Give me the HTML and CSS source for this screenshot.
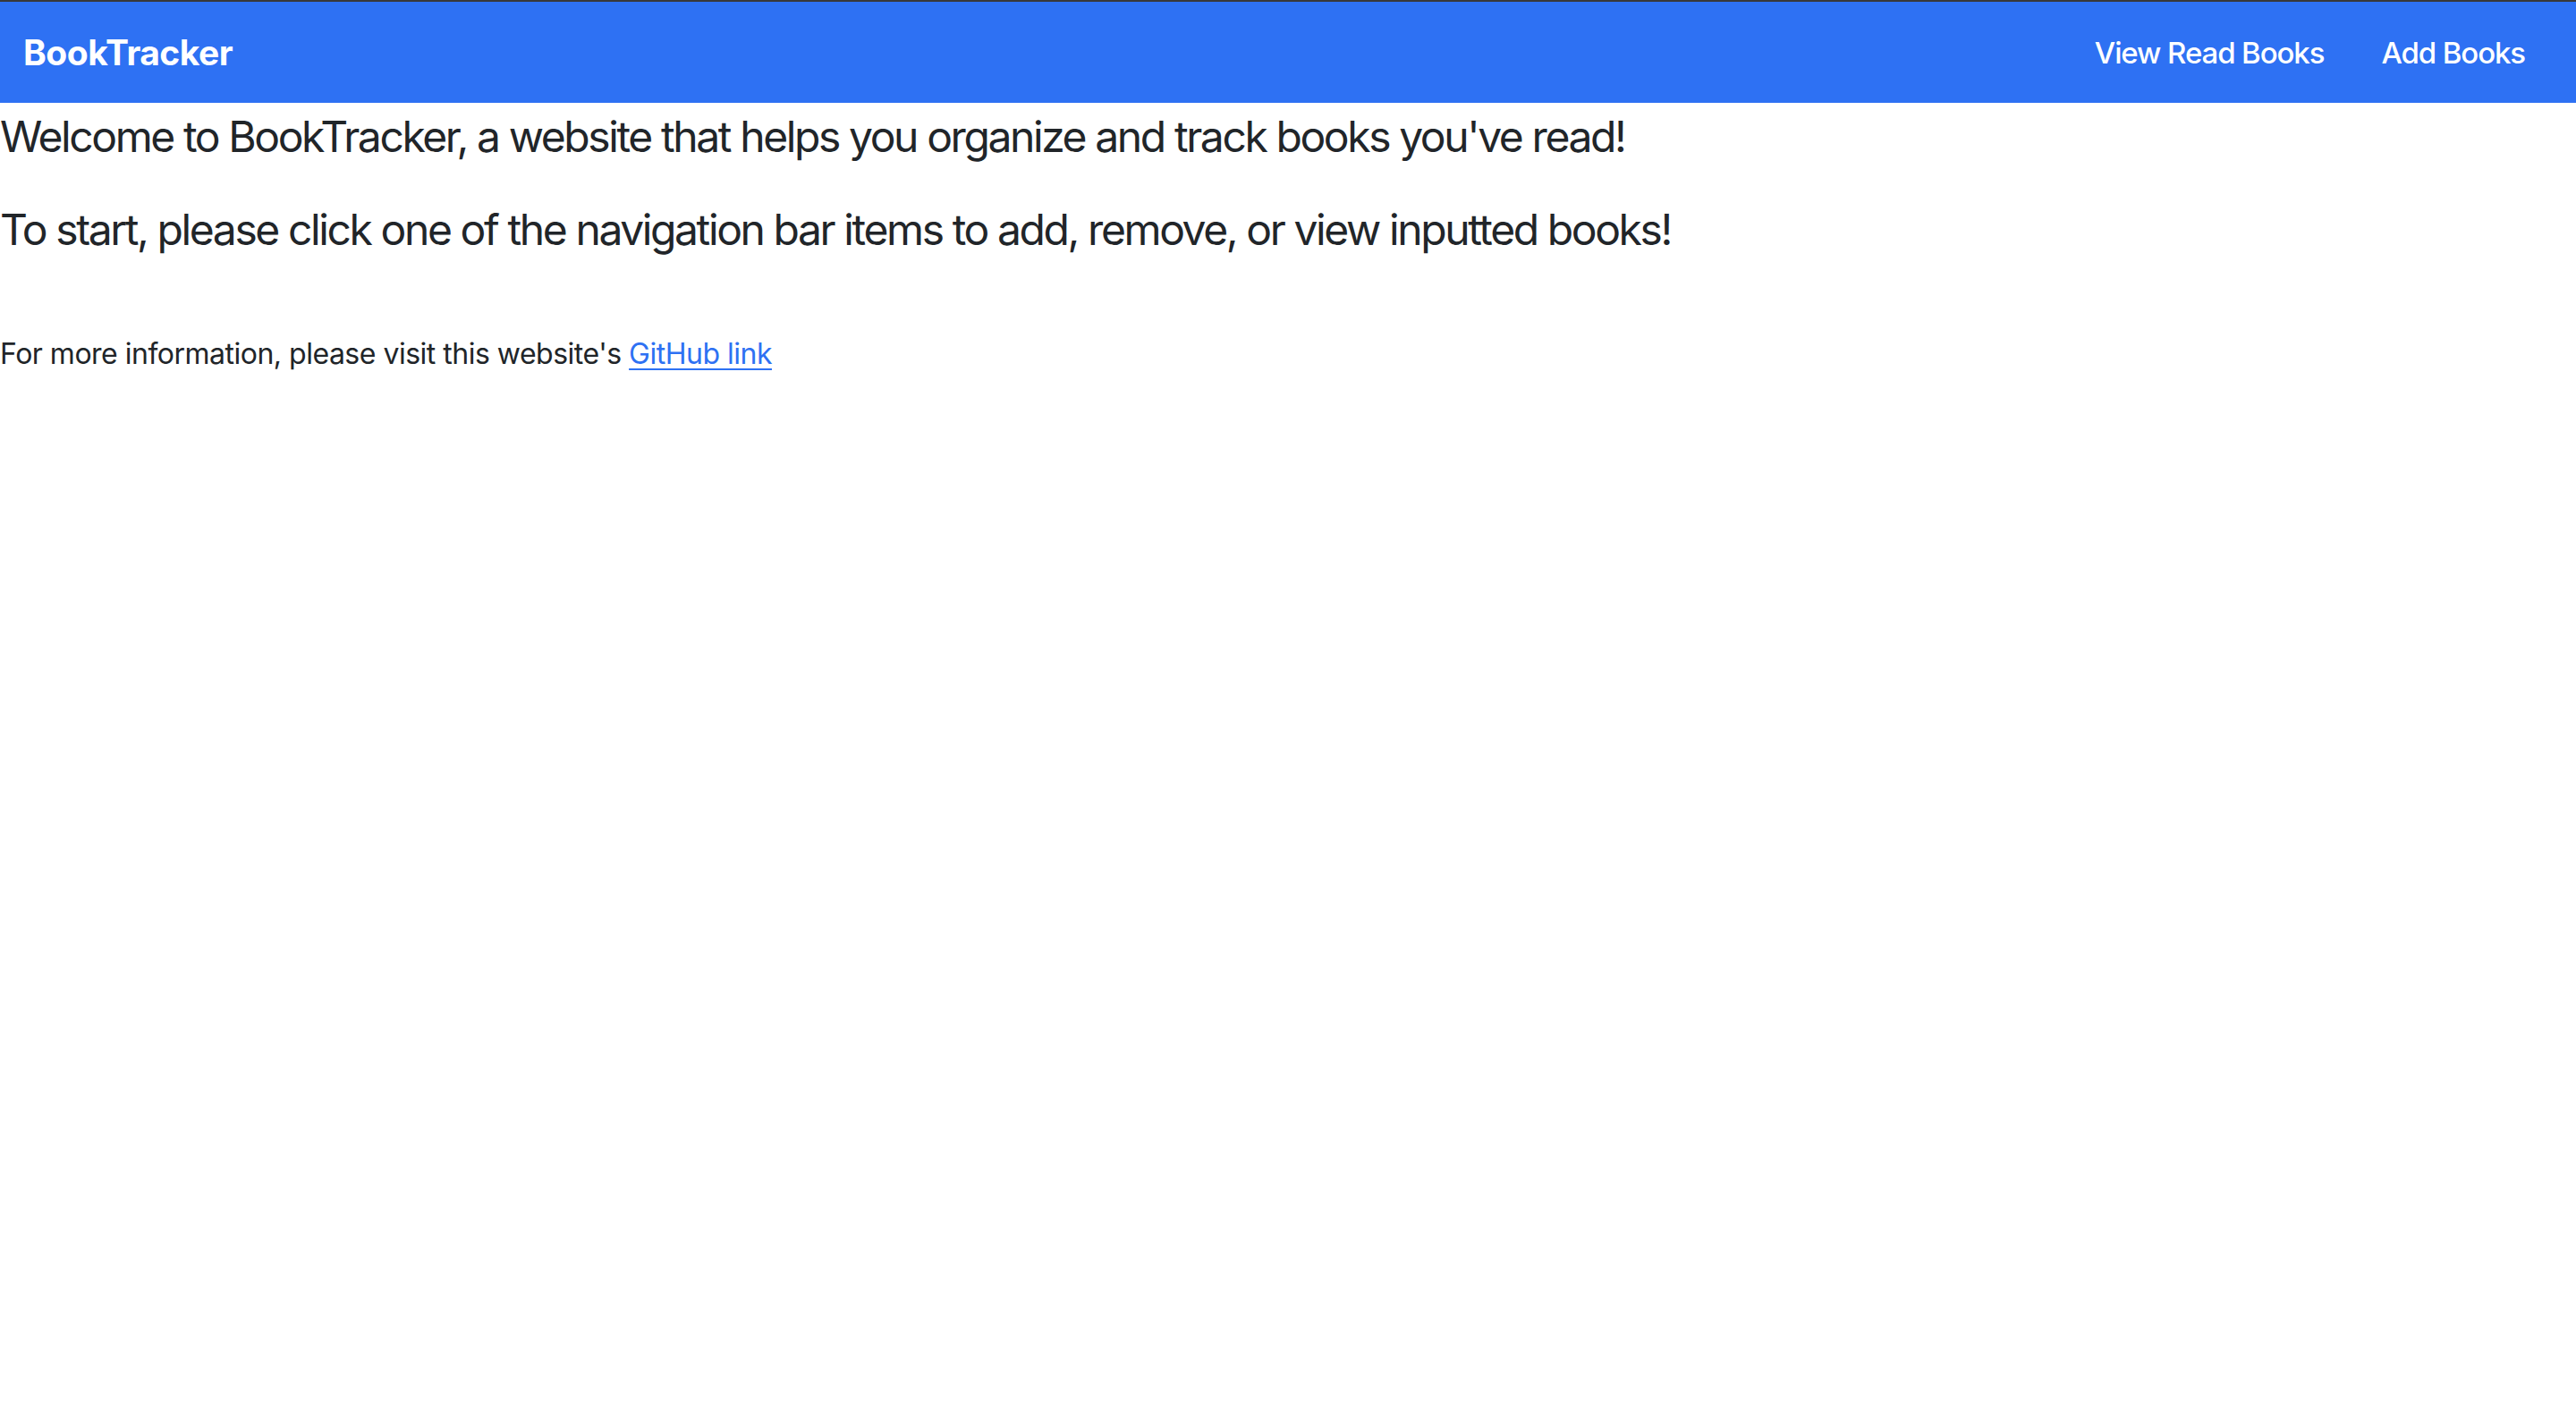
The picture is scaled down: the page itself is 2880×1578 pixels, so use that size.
FILE: index.html
```html
<!DOCTYPE html>
<html lang="en">
<head>
<meta charset="utf-8">
<title>BookTracker</title>
<link rel="stylesheet" href="styles.css">
</head>
<body>
<nav class="navbar">
  <a class="brand" href="#">BookTracker</a>
  <div class="nav-links">
    <a class="nav-link" href="#">View Read Books</a>
    <a class="nav-link" href="#">Add Books</a>
  </div>
</nav>
<main class="content">
  <h4 class="lead-line first">Welcome to BookTracker, a website that helps you organize and track books you've read!</h4>
  <h4 class="lead-line second">To start, please click one of the navigation bar items to add, remove, or view inputted books!</h4>
  <p class="info">For more information, please visit this website's <a class="link" href="#">GitHub link</a></p>
</main>
</body>
</html>
```

FILE: styles.css
```css
html, body {
  margin: 0;
  padding: 0;
  background: #ffffff;
}

body {
  font-family: Inter, "Noto Sans", "Liberation Sans", sans-serif;
  color: #212529;
}

.navbar {
  display: flex;
  align-items: center;
  justify-content: space-between;
  box-sizing: border-box;
  height: 115px;
  border-top: 2px solid #38383a;
  background: #2e71f3;
  padding: 0 25px 0 26px;
}

.brand {
  color: #ffffff;
  text-decoration: none;
  font-weight: 700;
  font-size: 39px;
  letter-spacing: -0.5px;
}

.nav-links {
  display: flex;
  align-items: center;
}

.nav-link {
  color: #ffffff;
  text-decoration: none;
  font-weight: 500;
  font-size: 33px;
  letter-spacing: -1.1px;
  padding: 0 32px;
}

.content {
  display: block;
}

.lead-line {
  font-size: 48px;
  font-weight: 400;
  line-height: 58px;
  letter-spacing: -2.4px;
  margin: 0;
}

.lead-line.first {
  margin-top: 9px;
}

.lead-line.second {
  margin-top: 46px;
}

.info {
  font-size: 32px;
  line-height: 48px;
  letter-spacing: -0.5px;
  margin: 86px 0 0 0;
}

.link {
  color: #2e71f3;
  text-decoration: underline;
  text-underline-offset: 5px;
  text-decoration-thickness: 2px;
}
```
